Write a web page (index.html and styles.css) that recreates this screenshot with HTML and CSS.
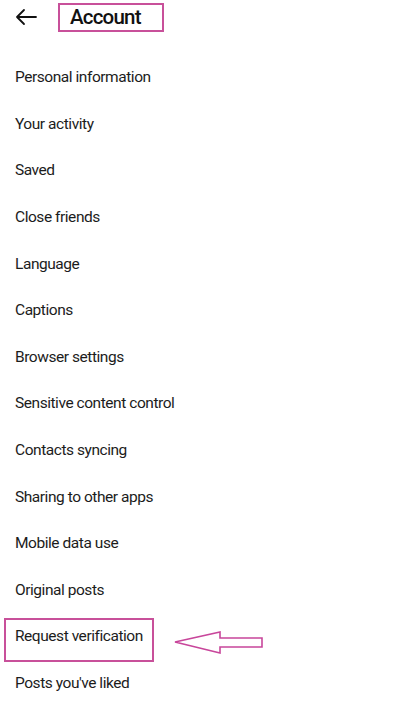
FILE: index.html
```html
<!DOCTYPE html>
<html>
<head>
<meta charset="utf-8">
<link rel="stylesheet" href="styles.css">
</head>
<body>
<div class="page">
  <header class="topbar">
    <svg class="back" width="24" height="18" viewBox="0 0 24 18">
      <path d="M22 9H3M10 2L3 9l7 7" fill="none" stroke="#111" stroke-width="1.8" stroke-linecap="round" stroke-linejoin="round"/>
    </svg>
    <div class="title-box"><h1 class="title">Account</h1></div>
  </header>
  <ul class="menu">
    <li class="item">Personal information</li>
    <li class="item">Your activity</li>
    <li class="item">Saved</li>
    <li class="item">Close friends</li>
    <li class="item">Language</li>
    <li class="item">Captions</li>
    <li class="item">Browser settings</li>
    <li class="item">Sensitive content control</li>
    <li class="item">Contacts syncing</li>
    <li class="item">Sharing to other apps</li>
    <li class="item">Mobile data use</li>
    <li class="item">Original posts</li>
    <li class="item item-marked">Request verification
      <span class="mark-box"></span>
      <svg class="mark-arrow" width="92" height="26" viewBox="0 0 92 26">
        <path d="M1 12L46 2V8H88V17H46V23Z" fill="#fff" stroke="#c8469b" stroke-width="1.6" stroke-linejoin="miter"/>
      </svg>
    </li>
    <li class="item">Posts you've liked</li>
  </ul>
</div>
</body>
</html>
```
FILE: styles.css
```css
html, body {
  margin: 0;
  padding: 0;
  background: #fff;
}
.page {
  width: 400px;
  height: 704px;
  overflow: hidden;
  font-family: Roboto, "Liberation Sans", sans-serif;
  color: #1c1c1c;
}
.topbar {
  display: flex;
  align-items: center;
  height: 36px;
  padding-left: 14px;
  gap: 20px;
  margin-top: -1px;
}
.back {
  display: block;
  margin-top: -1px;
}
.title-box {
  box-sizing: border-box;
  width: 106px;
  height: 29px;
  border: 2px solid #c8509a;
  padding-left: 10px;
  display: flex;
  align-items: center;
}
.title {
  margin: 0;
  font-size: 20.5px;
  font-weight: 500;
  letter-spacing: -0.8px;
  color: #111;
  line-height: 1;
}
.menu {
  list-style: none;
  margin: 0;
  padding: 19px 0 0 0;
}
.item {
  position: relative;
  height: 46.6px;
  display: flex;
  align-items: center;
  padding-left: 15px;
  font-size: 15.5px;
  letter-spacing: -0.45px;
}
.mark-box {
  position: absolute;
  left: 4px;
  top: 5px;
  width: 150px;
  height: 44px;
  box-sizing: border-box;
  border: 2px solid #c8509a;
}
.mark-arrow {
  position: absolute;
  left: 174px;
  top: 17px;
}
```
